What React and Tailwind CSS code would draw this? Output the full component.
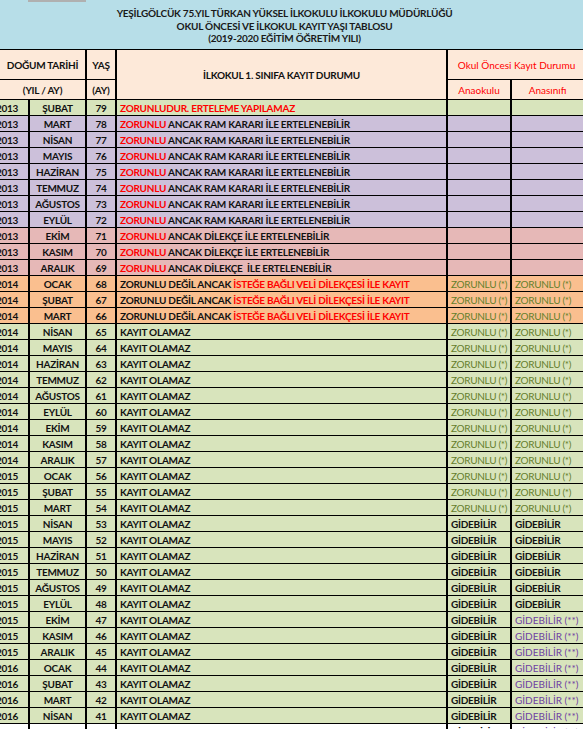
import React from "react";

const MONTHS = [
  ["2013", "ŞUBAT", 79],
  ["2013", "MART", 78],
  ["2013", "NİSAN", 77],
  ["2013", "MAYIS", 76],
  ["2013", "HAZİRAN", 75],
  ["2013", "TEMMUZ", 74],
  ["2013", "AĞUSTOS", 73],
  ["2013", "EYLÜL", 72],
  ["2013", "EKİM", 71],
  ["2013", "KASIM", 70],
  ["2013", "ARALIK", 69],
  ["2014", "OCAK", 68],
  ["2014", "ŞUBAT", 67],
  ["2014", "MART", 66],
  ["2014", "NİSAN", 65],
  ["2014", "MAYIS", 64],
  ["2014", "HAZİRAN", 63],
  ["2014", "TEMMUZ", 62],
  ["2014", "AĞUSTOS", 61],
  ["2014", "EYLÜL", 60],
  ["2014", "EKİM", 59],
  ["2014", "KASIM", 58],
  ["2014", "ARALIK", 57],
  ["2015", "OCAK", 56],
  ["2015", "ŞUBAT", 55],
  ["2015", "MART", 54],
  ["2015", "NİSAN", 53],
  ["2015", "MAYIS", 52],
  ["2015", "HAZİRAN", 51],
  ["2015", "TEMMUZ", 50],
  ["2015", "AĞUSTOS", 49],
  ["2015", "EYLÜL", 48],
  ["2015", "EKİM", 47],
  ["2015", "KASIM", 46],
  ["2015", "ARALIK", 45],
  ["2016", "OCAK", 44],
  ["2016", "ŞUBAT", 43],
  ["2016", "MART", 42],
  ["2016", "NİSAN", 41],
  ["2016", "MAYIS", 40],
];

const reg = "font-normal tracking-normal";

function rowInfo(age) {
  if (age === 79)
    return {
      bg: "bg-[#d8e4bc]",
      status: <span className="text-[#ff0000]">ZORUNLUDUR. ERTELEME YAPILAMAZ</span>,
      a: null,
      b: null,
    };
  if (age >= 72)
    return {
      bg: "bg-[#ccc0da]",
      status: (
        <span>
          <span className="text-[#ff0000]">ZORUNLU</span> ANCAK RAM KARARI İLE ERTELENEBİLİR
        </span>
      ),
      a: null,
      b: null,
    };
  if (age >= 69)
    return {
      bg: "bg-[#e6b8b7]",
      status: (
        <span>
          <span className="text-[#ff0000]">ZORUNLU</span>
          {age === 69 ? " ANCAK DİLEKÇE\u00a0 İLE ERTELENEBİLİR" : " ANCAK DİLEKÇE İLE ERTELENEBİLİR"}
        </span>
      ),
      a: null,
      b: null,
    };
  const zor = <span className="text-[#657f2c] font-normal tracking-[-0.3px]">ZORUNLU (*)</span>;
  if (age >= 66)
    return {
      bg: "bg-[#fabf8f]",
      status: (
        <span>
          ZORUNLU DEĞİL ANCAK <span className="text-[#ff0000]">İSTEĞE BAĞLI VELİ DİLEKÇESİ İLE KAYIT</span>
        </span>
      ),
      a: zor,
      b: zor,
    };
  if (age >= 54)
    return { bg: "bg-[#d8e4bc]", status: "KAYIT OLAMAZ", a: zor, b: zor };
  if (age >= 48)
    return { bg: "bg-[#d8e4bc]", status: "KAYIT OLAMAZ", a: "GİDEBİLİR", b: "GİDEBİLİR" };
  return {
    bg: age === 40 ? "bg-white" : "bg-[#d8e4bc]",
    status: "KAYIT OLAMAZ",
    a: "GİDEBİLİR",
    b: <span className={`text-[#6e40a2] ${reg}`}>GİDEBİLİR (**)</span>,
  };
}

const cell =
  "border-r-2 border-b border-black h-[16px] flex items-center overflow-hidden whitespace-nowrap";

export default function App() {
  return (
    <div
      className="w-[583px] h-[729px] overflow-hidden bg-white text-[#111] font-bold"
      style={{ fontFamily: "Lato, 'Open Sans', sans-serif" }}
    >
      <div className="ml-[-14px] w-[599px] grid grid-cols-[44px_57px_30px_331px_64px_73px] text-[10px] tracking-[-0.25px] leading-none">
        {/* Title */}
        <div className="col-span-6 h-[50px] bg-[#b7dee8] border-b border-black flex flex-col">
          <div className="ml-[42px] w-[58px] h-[2px] bg-[#b0b0b0]" />
          <div className="flex flex-col items-center pt-[5px] pr-[2px] leading-[12.5px] text-[#1a1a1a]">
            <div>YEŞİLGÖLCÜK 75.YIL TÜRKAN YÜKSEL İLKOKULU İLKOKULU MÜDÜRLÜĞÜ</div>
            <div>OKUL ÖNCESİ VE İLKOKUL KAYIT YAŞI TABLOSU</div>
            <div>(2019-2020 EĞİTİM ÖĞRETİM YILI)</div>
          </div>
        </div>

        {/* Header row 1 */}
        <div className="col-span-2 h-[30px] bg-[#fde9d9] border-r-2 border-b border-black flex items-center justify-center pl-[14px]">
          DOĞUM TARİHİ
        </div>
        <div className="h-[30px] bg-[#fde9d9] border-r-2 border-b border-black flex items-center justify-center">
          YAŞ
        </div>
        <div className="row-span-2 h-[50px] bg-[#fde9d9] border-r-2 border-b border-black flex items-center justify-center">
          İLKOKUL 1. SINIFA KAYIT DURUMU
        </div>
        <div className={`col-span-2 h-[30px] bg-[#fde9d9] border-b border-black flex items-center justify-center text-[#ff0000] ${reg}`}>
          Okul Öncesi Kayıt Durumu
        </div>

        {/* Header row 2 */}
        <div className="col-span-2 h-[20px] bg-[#fde9d9] border-r-2 border-b border-black flex items-center justify-center pl-[14px]">
          (YIL / AY)
        </div>
        <div className="h-[20px] bg-[#fde9d9] border-r-2 border-b border-black flex items-center justify-center">
          (AY)
        </div>
        <div className={`h-[20px] bg-[#fde9d9] border-r-2 border-b border-black flex items-center justify-center text-[#ff0000] ${reg}`}>
          Anaokulu
        </div>
        <div className={`h-[20px] bg-[#fde9d9] border-r-2 border-b border-black flex items-center justify-center text-[#ff0000] ${reg}`}>
          Anasınıfı
        </div>

        {/* Data rows */}
        {MONTHS.map(([year, month, age]) => {
          const r = rowInfo(age);
          return (
            <React.Fragment key={age}>
              <div className={`${cell} ${r.bg} justify-center`}>{year}</div>
              <div className={`${cell} ${r.bg} justify-center`}>{month}</div>
              <div className={`${cell} ${r.bg} justify-center`}>{age}</div>
              <div className={`${cell} ${r.bg} pl-[3px]`}>{r.status}</div>
              <div className={`${cell} ${r.bg} pl-[3px]`}>{r.a}</div>
              <div className={`${cell} ${r.bg} pl-[3px]`}>{r.b}</div>
            </React.Fragment>
          );
        })}
      </div>
    </div>
  );
}
